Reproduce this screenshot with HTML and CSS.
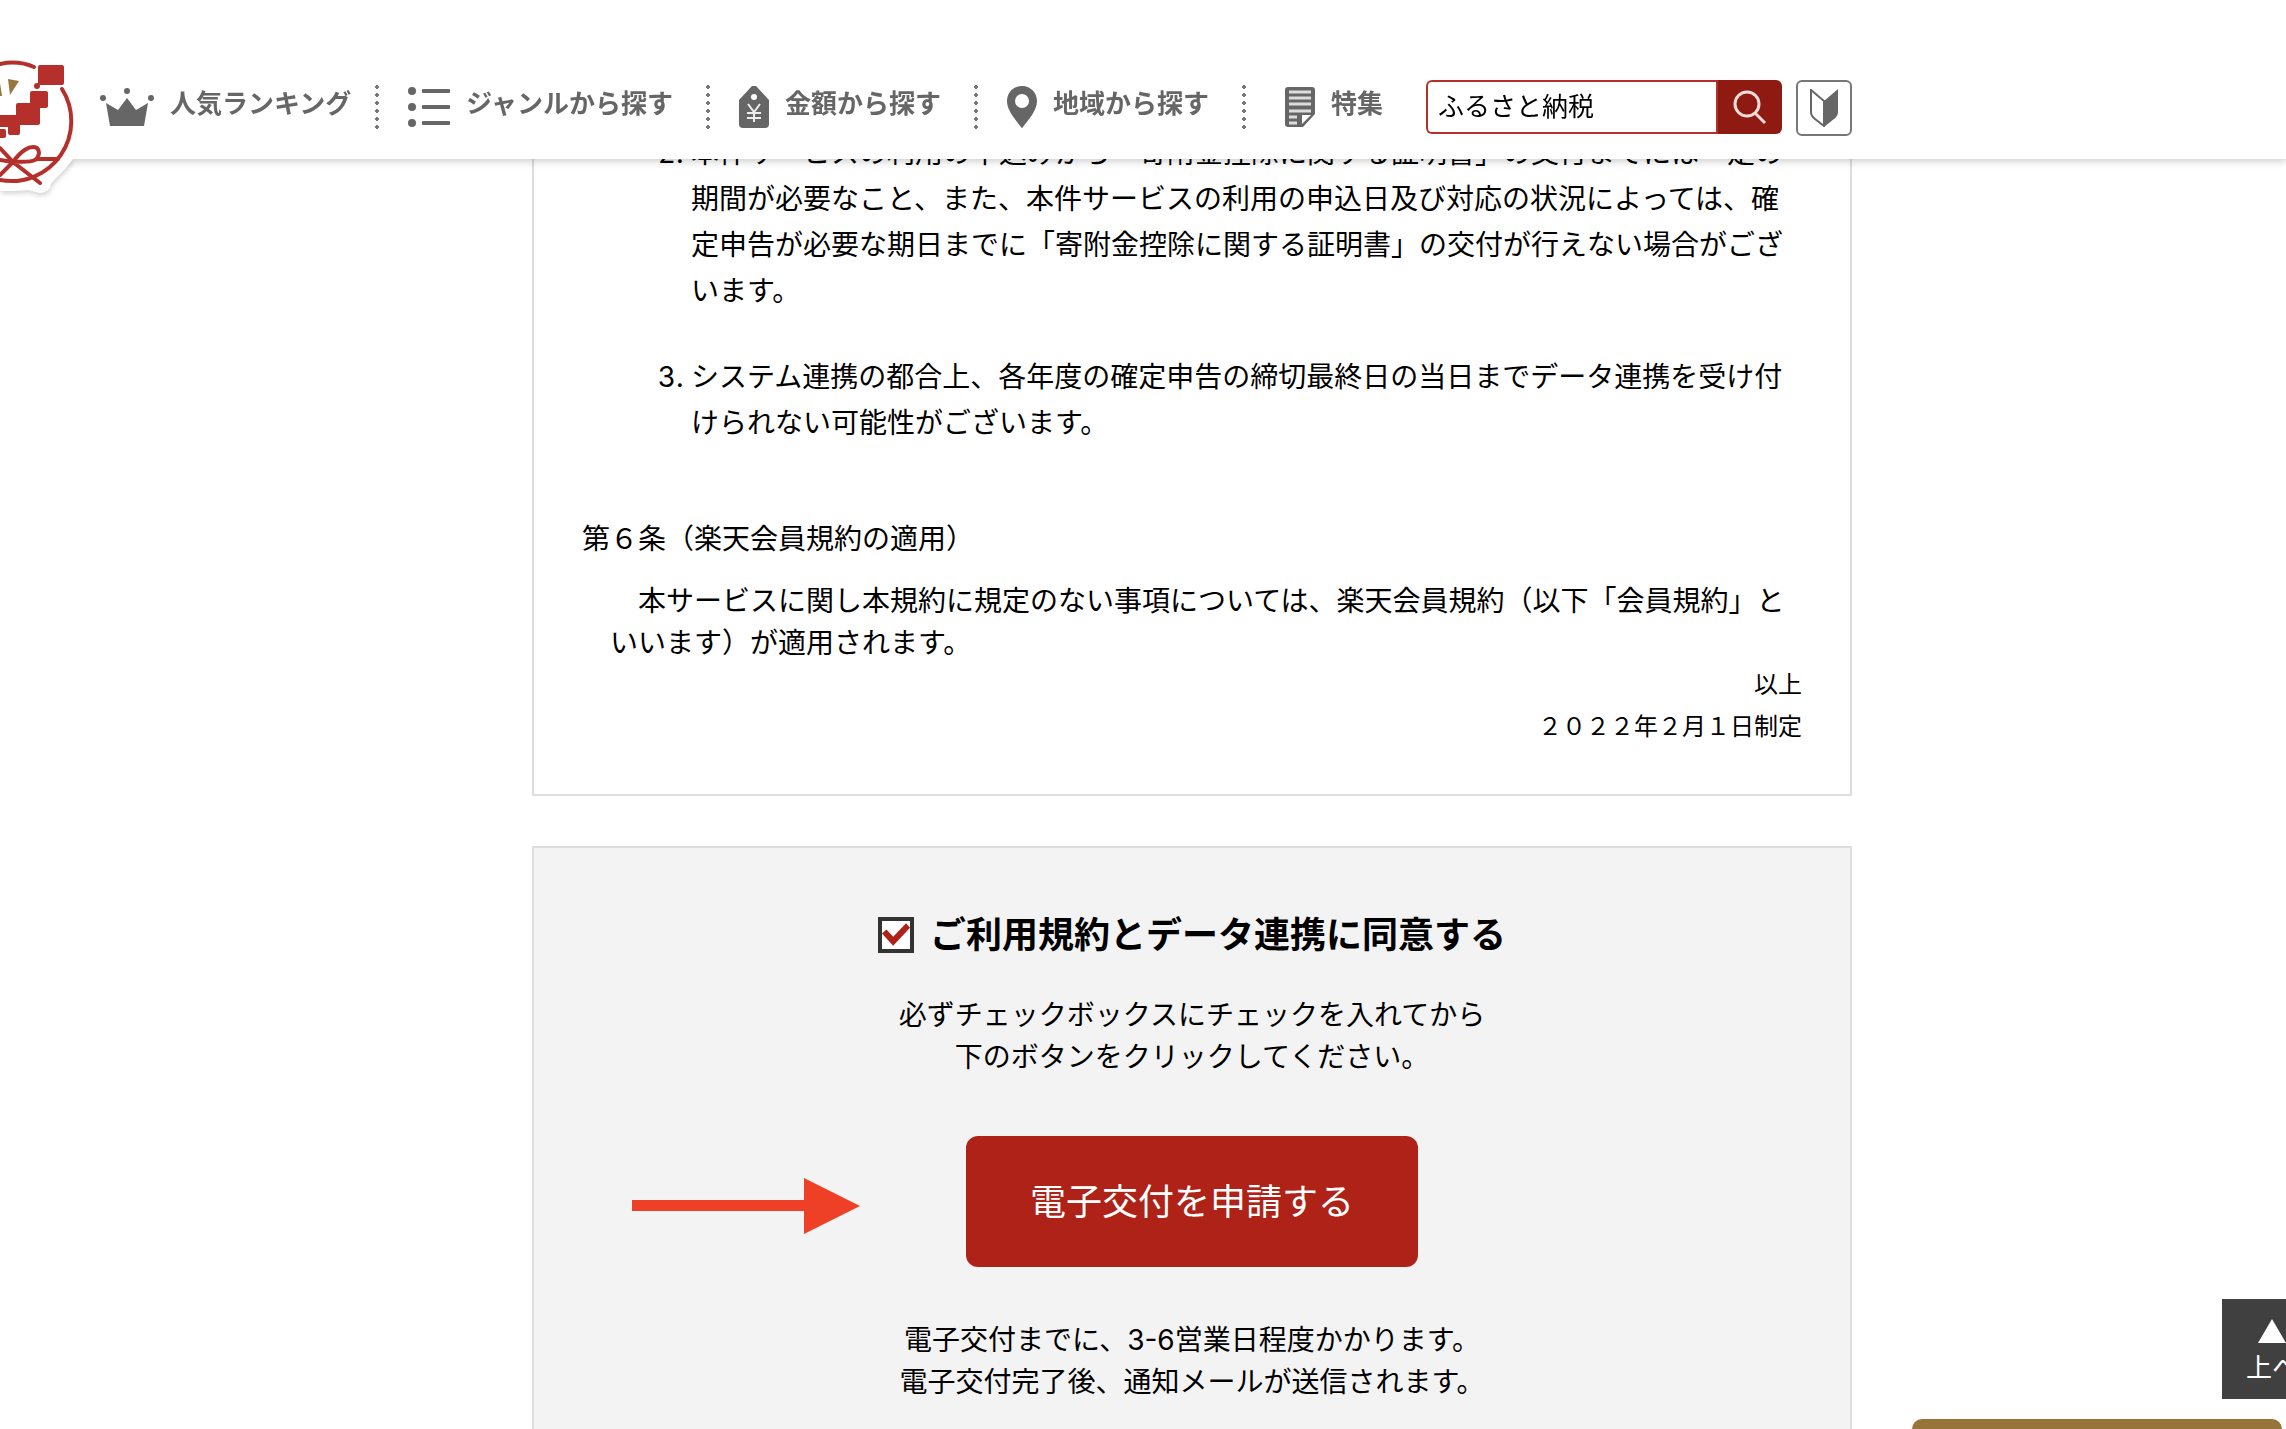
FILE: index.html
```html
<!DOCTYPE html>
<html lang="ja">
<head>
<meta charset="utf-8">
<title>ふるさと納税 電子交付の申請</title>
<link rel="stylesheet" href="styles.css">
</head>
<body>
<header class="header">
  <a class="logo" href="#" aria-label="ホーム">
    <svg width="90" height="160" viewBox="0 40 90 160" fill="none">
      <path class="logo-plate" d="M0 150H60L73 159L66 168L54 180Q50 184 50 188Q44 195 36 192L28 190L14 191H0Z" fill="#fff"/>
      <g stroke="#b5302a" stroke-width="4" stroke-linecap="round">
        <path d="M0 64Q18 60 34 67"/>
        <path d="M62 89A60 60 0 0 1 0 180"/>
        <path d="M13 162C20 152 30 144 37 148C41 152 38 158 35 160C29 163 20 161 13 162L40 183M36 159H58M13 162L0 175M13 162L0 148M13 162L0 160"/>
      </g>
      <g fill="#b5302a">
        <rect x="38" y="65" width="26" height="20" rx="2"/>
        <circle cx="37" cy="86" r="3"/>
        <rect x="30" y="91" width="18" height="17" rx="2"/>
        <rect x="16" y="103" width="24" height="22" rx="2"/>
        <rect x="-4" y="115" width="24" height="12"/>
        <rect x="8" y="118" width="12" height="17" rx="2"/>
        <rect x="-4" y="129" width="10" height="9" rx="2"/>
      </g>
      <path d="M8 79L19 81L10 95ZM0 83L2 96H0Z" fill="#98773d"/>
    </svg>
  </a>
  <div class="header-inner">
    <ul class="nav">
      <li><a href="#">
        <svg width="54" height="40" viewBox="0 0 54 40" fill="#666"><circle cx="3" cy="11" r="3"/><circle cx="27" cy="4" r="3"/><circle cx="51" cy="11" r="3"/><path d="M6 16L18 23L27 11L36 23L48 16L44 39H10Z"/></svg>
        <span>人気ランキング</span></a></li>
      <li><a href="#">
        <svg width="42" height="42" viewBox="0 0 42 42" fill="#666"><circle cx="4" cy="5" r="4"/><circle cx="4" cy="21" r="4"/><circle cx="4" cy="37" r="4"/><rect x="14" y="3" width="28" height="4" rx="1"/><rect x="14" y="19" width="28" height="4" rx="1"/><rect x="14" y="35" width="28" height="4" rx="1"/></svg>
        <span>ジャンルから探す</span></a></li>
      <li><a href="#">
        <svg width="30" height="42" viewBox="0 0 30 42"><path d="M13 0H17L30 14V38Q30 42 26 42H4Q0 42 0 38V14Z" fill="#666"/><circle cx="15" cy="11" r="3" fill="#fff"/><path d="M9 18L15 26L21 18M15 26V36M8 27H22M8 32H22" fill="none" stroke="#eee" stroke-width="2"/></svg>
        <span>金額から探す</span></a></li>
      <li><a href="#">
        <svg width="30" height="42" viewBox="0 0 30 42" fill="#666" fill-rule="evenodd"><path d="M15 0C24 0 30 7 30 15C30 25 21 34 16 41Q15 43 14 41C9 34 0 25 0 15C0 7 6 0 15 0ZM15 8A7 7 0 1 0 15 22A7 7 0 1 0 15 8Z"/></svg>
        <span>地域から探す</span></a></li>
      <li><a href="#">
        <svg width="40" height="40" viewBox="-10 0 40 40"><path d="M3 0H27Q30 0 30 3V27L18 40H3Q0 40 0 37V3Q0 0 3 0Z" fill="#666"/><path d="M4 5H26M4 11H26M4 17H26M4 24H26M4 30H12M4 36H12" stroke="#ddd" stroke-width="3"/><path d="M17 28H26L17 37Z" fill="#fff"/></svg>
        <span>特集</span></a></li>
    </ul>
    <form class="search" role="search">
      <input class="search-box" type="text" value="ふるさと納税" aria-label="検索キーワード">
      <button class="search-button" type="button" aria-label="検索">
        <svg width="34" height="36" viewBox="0 0 34 36" fill="none" stroke="#f0dcda" stroke-width="3"><circle cx="14" cy="15" r="12"/><path d="M22 24L32 34"/></svg>
      </button>
    </form>
    <a class="beginner" href="#" aria-label="はじめての方へ">
      <svg width="28" height="38" viewBox="0 0 28 38"><path d="M1 1L14 12V37L5 30Q1 27 1 23Z" fill="#fff" stroke="#666" stroke-width="2"/><path d="M28 0L14 12V38L24 30Q28 27 28 23Z" fill="#666"/></svg>
    </a>
  </div>
</header>

<main class="main">
  <section class="terms">
    <ol class="terms-list" start="2">
      <li>本件サービスの利用の申込みから「寄附金控除に関する証明書」の交付までには一定の期間が必要なこと、また、本件サービスの利用の申込日及び対応の状況によっては、確定申告が必要な期日までに「寄附金控除に関する証明書」の交付が行えない場合がございます。</li>
      <li>システム連携の都合上、各年度の確定申告の締切最終日の当日までデータ連携を受け付けられない可能性がございます。</li>
    </ol>
    <h2 class="terms-title">第６条（楽天会員規約の適用）</h2>
    <p class="terms-text">本サービスに関し本規約に規定のない事項については、楽天会員規約（以下「会員規約」といいます）が適用されます。</p>
    <p class="terms-date">以上<br>２０２２年２月１日制定</p>
  </section>

  <section class="agree">
    <label class="agree-label"><input class="agree-check" type="checkbox" checked>ご利用規約とデータ連携に同意する</label>
    <p class="agree-text">必ずチェックボックスにチェックを入れてから<br>下のボタンをクリックしてください。</p>
    <div class="agree-action">
      <svg class="arrow" width="228" height="56" viewBox="0 0 228 56" fill="#ee4026"><path d="M0 22H172V0L228 28L172 56V33H0Z"/></svg>
      <button class="submit" type="button">電子交付を申請する</button>
    </div>
    <p class="agree-text">電子交付までに、3-6営業日程度かかります。<br>電子交付完了後、通知メールが送信されます。</p>
  </section>
</main>

<a class="page-top" href="#">
  <svg width="28" height="24" viewBox="0 0 28 24" fill="#fff"><path d="M14 0L28 24H0Z"/></svg>
  上へ
</a>
<a class="banner" href="#" aria-label="お知らせ"></a>
</body>
</html>
```
FILE: styles.css
```css
* {
  box-sizing: border-box;
}

body {
  margin: 0;
  height: 100vh;
  overflow: hidden;
  background: #fff;
  color: #000;
  font-family: Inter, "Noto Sans CJK JP", sans-serif;
  font-size: 28px;
  line-height: 42px;
}

a {
  color: inherit;
  text-decoration: none;
}

svg {
  display: block;
  flex: none;
}

.header {
  position: fixed;
  inset: 0 0 auto;
  z-index: 2;
  height: 159px;
  padding: 80px 0 0 100px;
  background: #fff;
  box-shadow: 0 2px 8px rgba(0, 0, 0, 0.22);
}

.logo {
  position: absolute;
  top: 40px;
  left: 0;
}

.logo-plate {
  filter: drop-shadow(1px 3px 2px rgba(0, 0, 0, 0.15));
}

.header-inner {
  display: flex;
  align-items: flex-start;
  max-width: 1752px;
}

.nav {
  display: flex;
  margin: 0;
  padding: 0;
  list-style: none;
  color: #666;
  font-size: 26px;
  font-weight: bold;
  white-space: nowrap;
}

.nav li {
  display: flex;
  align-items: center;
  height: 54px;
}

.nav li:not(:last-child)::after {
  content: "";
  width: 4px;
  height: 48px;
  margin: 0 29px 0 33px;
  background: radial-gradient(circle at 2px 4px, #777 2px, transparent 2px) 0 0 / 4px 8px;
}

.nav li:first-child::after {
  margin-left: 24px;
}

.nav a {
  display: flex;
  align-items: center;
  gap: 16px;
  height: 48px;
}

.nav span {
  padding-bottom: 6px;
}

.search {
  display: flex;
  width: 356px;
  height: 54px;
  margin-left: auto;
}

.search-box {
  flex: 1;
  min-width: 0;
  padding: 0 0 0 10px;
  border: 2px solid #b5302a;
  border-right: 0;
  border-radius: 6px 0 0 6px;
  outline: 0;
  font: inherit;
  font-size: 26px;
}

.search-button {
  display: flex;
  align-items: center;
  justify-content: center;
  width: 66px;
  padding: 0;
  border: 0;
  border-left: 2px solid #b5302a;
  border-radius: 0 6px 6px 0;
  background: #8f1a12;
}

.beginner {
  display: flex;
  align-items: center;
  justify-content: center;
  width: 56px;
  height: 56px;
  margin-left: 14px;
  border: 2px solid #777;
  border-radius: 6px;
}

.main {
  max-width: 1418px;
  margin: 0 auto;
  padding-left: 98px;
}

.terms {
  padding: 130px 48px 46px;
  border: 2px solid #ddd;
  border-top: 0;
}

.terms-list {
  margin: 0 0 72px;
  padding: 0 14px 0 109px;
  line-height: 46px;
}

.terms-list li + li {
  margin-top: 40px;
}

.terms-title {
  margin: 0 0 20px;
  font-size: 28px;
  font-weight: normal;
}

.terms-text {
  margin: 0;
  padding: 0 14px 0 28px;
  text-indent: 1em;
}

.terms-date {
  margin: 0;
  font-size: 24px;
  text-align: right;
}

.agree {
  display: flex;
  flex-direction: column;
  align-items: center;
  margin-top: 50px;
  padding: 62px 48px;
  border: 2px solid #ddd;
  background: #f3f3f3;
}

.agree-label {
  display: flex;
  align-items: center;
  gap: 16px;
  height: 50px;
  font-size: 36px;
  font-weight: bold;
}

.agree-check {
  appearance: none;
  width: 36px;
  height: 36px;
  margin: 0;
  border: 4px solid #333;
  background: #fff;
}

.agree-check:checked::before {
  content: "";
  display: block;
  width: 28px;
  height: 28px;
  background: #ae2217;
  clip-path: polygon(0 45%, 16% 30%, 40% 56%, 86% 8%, 100% 24%, 40% 88%);
}

.agree-text {
  margin: 34px 0 0;
  text-align: center;
}

.agree-action {
  position: relative;
  margin: 58px 0 18px;
}

.arrow {
  position: absolute;
  top: 42px;
  right: 100%;
  margin-right: 106px;
}

.submit {
  width: 452px;
  height: 131px;
  padding: 0;
  border: 0;
  border-radius: 12px;
  background: #ae2217;
  color: #fff;
  font: inherit;
  font-size: 36px;
}

.page-top {
  position: fixed;
  right: -36px;
  bottom: 30px;
  display: flex;
  flex-direction: column;
  align-items: center;
  gap: 4px;
  width: 100px;
  height: 100px;
  padding-top: 20px;
  background: #404040;
  color: #fff;
  font-size: 26px;
}

.banner {
  position: fixed;
  right: 4px;
  bottom: 0;
  width: 370px;
  height: 10px;
  border-radius: 10px 10px 0 0;
  background: #96743a;
}
```
